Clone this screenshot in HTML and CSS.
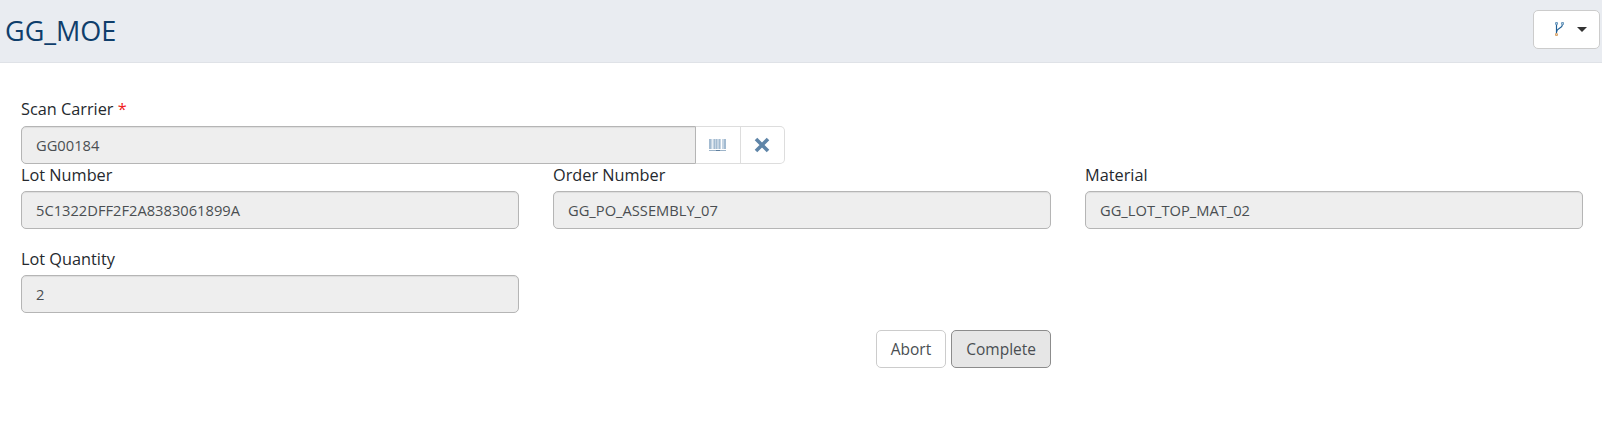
FILE: index.html
```html
<!DOCTYPE html>
<html lang="en">
<head>
<meta charset="UTF-8">
<meta name="viewport" content="width=device-width, initial-scale=1.0">
<title>GG_MOE</title>
<link rel="stylesheet" href="styles.css">
</head>
<body>
    <div class="page-header">
        <div class="page-title">GG_MOE</div>
        <button class="branch-btn">
            <svg width="9" height="14" viewBox="0 0 9 14" fill="none" stroke="#1f5f95" stroke-width="1.2">
                <path d="M1.5 2.5V11.5"/>
                <path d="M7.5 2.5C7.5 6.5 1.5 6 1.5 10"/>
                <circle cx="1.5" cy="1.5" r="1" stroke="#6f9cc0"/>
                <circle cx="7.5" cy="1.5" r="1" stroke="#6f9cc0"/>
                <circle cx="1.5" cy="12.5" r="1" stroke="#d9a56c"/>
            </svg>
            <span class="caret"></span>
        </button>
    </div>

    <div class="content">
        <div class="field-label scan-label">Scan Carrier <span class="required">*</span></div>
        <div class="scan-group">
            <div class="field-value scan-value">GG00184</div>
            <button class="icon-btn">
                <svg width="17" height="13" viewBox="0 0 17 13">
                    <rect x="0" y="0" width="17" height="10" fill="#c6d5e3"/>
                    <g fill="#a3bbd1">
                        <rect x="0" y="0" width="2" height="10"/>
                        <rect x="5" y="0" width="1" height="10"/>
                        <rect x="7" y="0" width="1" height="10"/>
                        <rect x="10" y="0" width="1" height="10"/>
                        <rect x="15" y="0" width="2" height="10"/>
                    </g>
                    <rect x="12" y="0" width="1" height="10" fill="#fff"/>
                    <rect x="3" y="0" width="1" height="10" fill="#e8eef4"/>
                    <rect x="0" y="11" width="17" height="1" fill="#9db4c9"/>
                    <rect x="7" y="11" width="4" height="1" fill="#5f7f9e"/>
                </svg>
            </button>
            <button class="icon-btn clear-btn">
                <svg width="16" height="16" viewBox="0 0 16 16" stroke="#5f85a8" stroke-width="3.6" fill="none">
                    <path d="M2 2L14 14M14 2L2 14"/>
                </svg>
            </button>
        </div>

        <div class="field-grid">
            <div class="field">
                <div class="field-label">Lot Number</div>
                <div class="field-value">5C1322DFF2F2A8383061899A</div>
            </div>
            <div class="field">
                <div class="field-label">Order Number</div>
                <div class="field-value">GG_PO_ASSEMBLY_07</div>
            </div>
            <div class="field">
                <div class="field-label">Material</div>
                <div class="field-value">GG_LOT_TOP_MAT_02</div>
            </div>
            <div class="field">
                <div class="field-label">Lot Quantity</div>
                <div class="field-value">2</div>
            </div>
        </div>

        <div class="actions">
            <button class="btn">Abort</button>
            <button class="btn btn-complete">Complete</button>
        </div>
    </div>
</body>
</html>
```

FILE: styles.css
```css
body, html {
    margin: 0;
    padding: 0;
    background-color: #fff;
    font-family: "Open Sans", "Liberation Sans", sans-serif;
    color: #25292e;
}
button {
    font-family: inherit;
    cursor: pointer;
}

/* Header */
.page-header {
    display: flex;
    justify-content: space-between;
    align-items: center;
    height: 62px;
    padding: 0 2px 0 5px;
    background-color: #e9ecf1;
    border-bottom: 1px solid #dfe2e7;
}
.page-title {
    font-size: 27px;
    color: #0f3e6b;
    margin-bottom: 2px;
}
.branch-btn {
    display: flex;
    align-items: center;
    justify-content: center;
    gap: 13px;
    width: 67px;
    height: 39px;
    margin-bottom: 4px;
    padding: 0 0 0 8px;
    background-color: #fff;
    border: 1px solid #ccc;
    border-radius: 5px;
}
.caret {
    width: 0;
    height: 0;
    border-top: 5px solid #333;
    border-left: 5px solid transparent;
    border-right: 5px solid transparent;
}

/* Form */
.content {
    padding: 35px 19px 0 21px;
}
.field-label {
    font-size: 16.3px;
    font-weight: 500;
    line-height: 22px;
    margin-bottom: 5px;
}
.scan-label {
    margin-bottom: 6px;
}
.required {
    color: #f01c1c;
}
.field-value {
    box-sizing: border-box;
    height: 38px;
    padding: 0 14px;
    font-size: 14.7px;
    line-height: 37px;
    color: #4a4e52;
    background-color: #eee;
    border: 1px solid #b5b5b5;
    border-radius: 5px;
    box-shadow: inset 0 1px 1px rgba(0, 0, 0, .075);
}
.scan-group {
    display: flex;
    width: 764px;
    height: 38px;
}
.scan-value {
    flex: 1;
    border-radius: 5px 0 0 5px;
}
.icon-btn {
    display: flex;
    align-items: center;
    justify-content: center;
    width: 44.5px;
    padding: 0;
    background-color: #fff;
    border: 1px solid #ddd;
    border-left: none;
}
.clear-btn {
    border-radius: 0 5px 5px 0;
}
.field-grid {
    display: grid;
    grid-template-columns: repeat(3, 498px);
    column-gap: 34px;
    row-gap: 19px;
}
.actions {
    display: flex;
    justify-content: flex-end;
    gap: 5px;
    width: 1030px;
    margin-top: 17px;
}
.btn {
    height: 38px;
    padding: 0 14px;
    font-size: 15.5px;
    color: #4a4e52;
    background-color: #fff;
    border: 1px solid #ccc;
    border-radius: 5px;
}
.btn-complete {
    background-color: #e6e6e6;
    border-color: #8c8c8c;
}
```
